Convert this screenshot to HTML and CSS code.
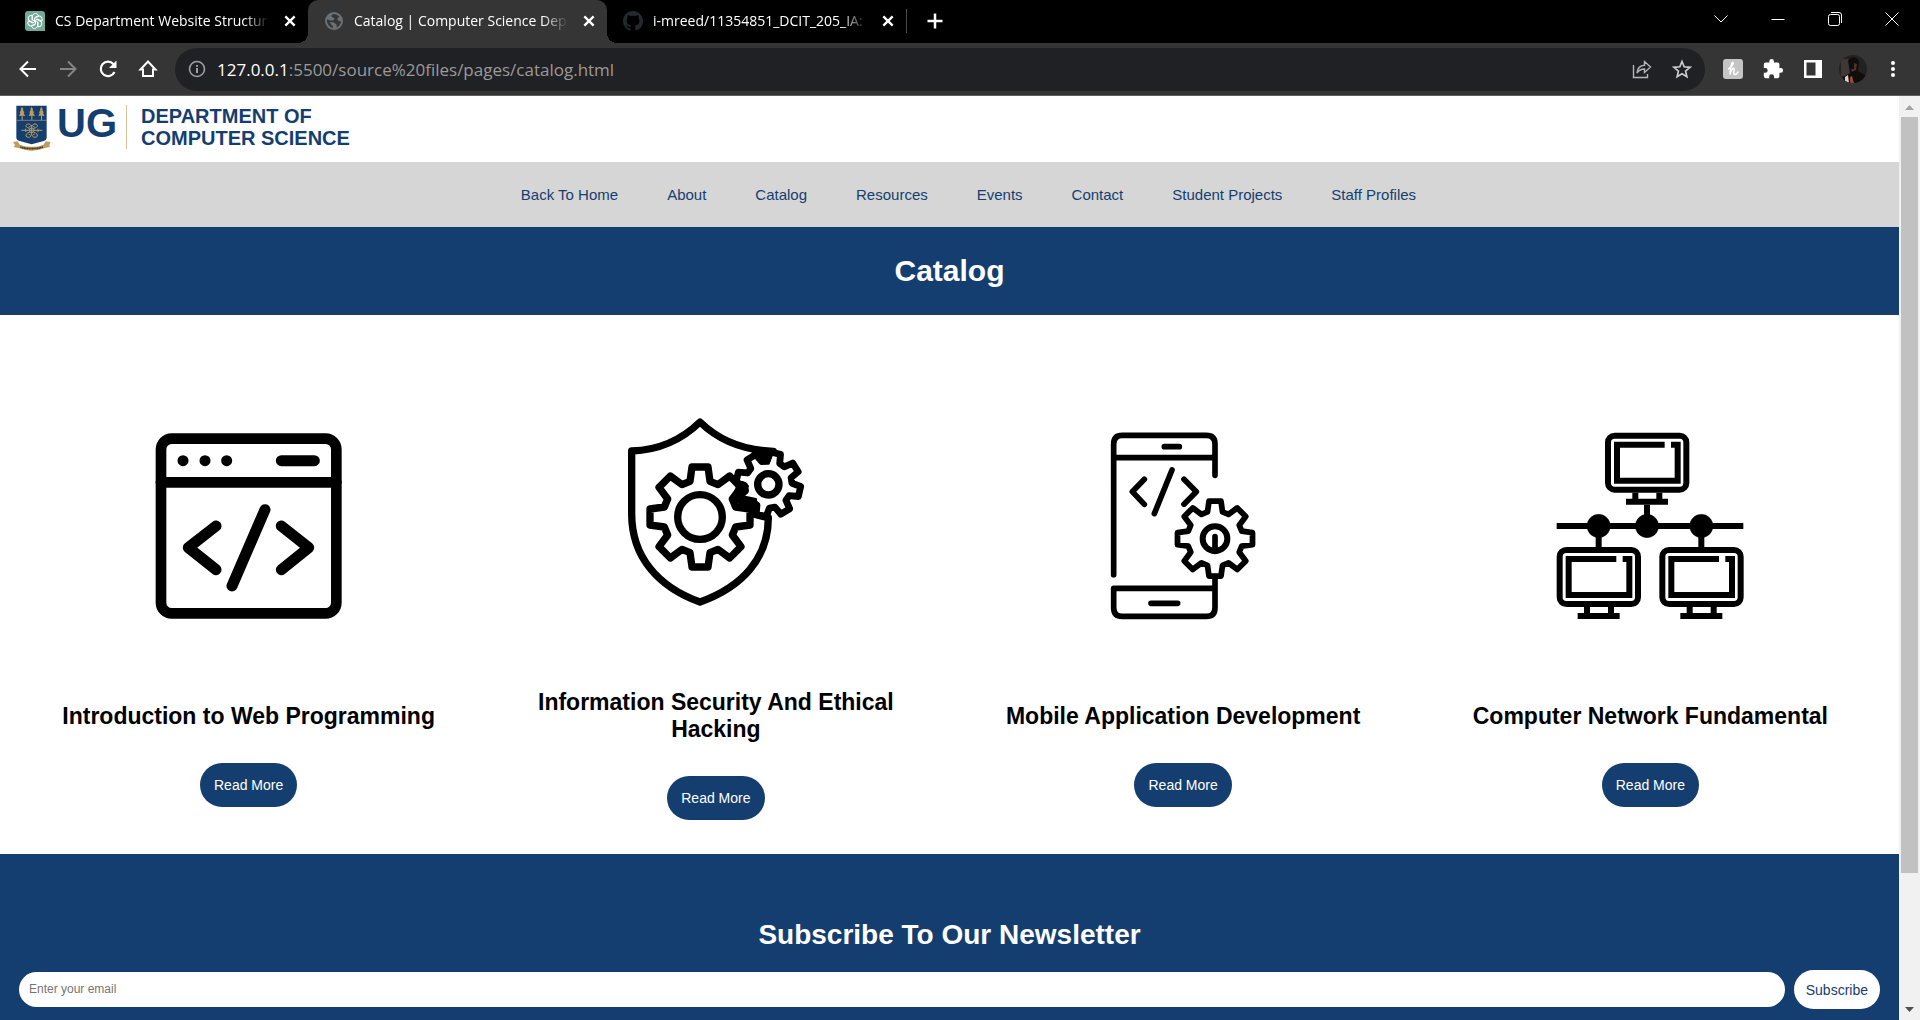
FILE: index.html
```html
<!DOCTYPE html>
<html lang="en">
<head>
<meta charset="utf-8">
<title>Catalog | Computer Science Department</title>
<link rel="stylesheet" href="styles.css">
</head>
<body>
<svg class="defs" aria-hidden="true">
  <defs>
    <path id="gear" d="M-30-107L-24-150L24-150L30-107L54-97L89-123L123-89L97-54L107-30L150-24L150 24L107 30L97 54L123 89L89 123L54 97L30 107L24 150L-24 150L-30 107L-54 97L-89 123L-123 89L-97 54L-107 30L-150 24L-150-24L-107-30L-97-54L-123-89L-89-123L-54-97Z"/>
    <g id="monitor">
      <rect x="9" y="9" width="235" height="162" rx="20" fill="none" stroke-width="18"/>
      <path d="M179 36H36V144H218V36H198" fill="none" stroke-width="18"/>
      <path d="M91 180V198M163 180V198M63 207H189" fill="none" stroke-width="18"/>
    </g>
  </defs>
</svg>

<div class="browser">
  <div class="tabstrip">
    <div class="tab">
      <svg class="favicon" viewBox="0 0 20 20"><path d="M3 0H17a3 3 0 0 1 3 3V20H3a3 3 0 0 1-3-3V3a3 3 0 0 1 3-3z" fill="#74aa9c"/><g fill="none" stroke="#fff" stroke-width="1"><path id="petal" d="M7.500 9V5.500C7.500 3.500 9 2.500 10.500 2.500S13 3.500 13.500 4.500L9.500 6.800V11"/><use href="#petal" transform="rotate(60 10 10)"/><use href="#petal" transform="rotate(120 10 10)"/><use href="#petal" transform="rotate(180 10 10)"/><use href="#petal" transform="rotate(240 10 10)"/><use href="#petal" transform="rotate(300 10 10)"/></g></svg>
      <span class="tab-title">CS Department Website Structur</span>
      <button class="tab-close" aria-label="Close tab"><svg viewBox="0 0 12 12"><path d="M2 2l8 8M10 2l-8 8"/></svg></button>
    </div>
    <div class="tab tab-active">
      <svg class="favicon" viewBox="0 0 20 20"><circle cx="10" cy="10" r="9" fill="#6b7075"/><path d="M9 3C7 4 7 6 9 6.500C11 7 11 8 9.500 9C8 10 7 10 5 9L3 8.500C2.500 12 5 16 9 17V15C7 14 7 12.500 5.500 11.500C8 11 10 11 11 12.500C12.500 13 13 14 12.500 16.500C15 15.500 17 13 17 10C15.500 10.500 14 10 13.500 8.500C13 7 14 6.500 15.500 6C14 4 12 3 9 3z" fill="#353535"/></svg>
      <span class="tab-title">Catalog | Computer Science Dep</span>
      <button class="tab-close" aria-label="Close tab"><svg viewBox="0 0 12 12"><path d="M2 2l8 8M10 2l-8 8"/></svg></button>
    </div>
    <div class="tab">
      <svg class="favicon" viewBox="0 0 16 16"><path fill="#24292e" d="M8 0C3.580 0 0 3.580 0 8c0 3.540 2.290 6.530 5.470 7.590.4.070.55-.17.55-.38 0-.19-.01-.82-.01-1.490-2.010.37-2.530-.49-2.690-.94-.09-.23-.48-.94-.82-1.130-.28-.15-.68-.52-.01-.53.63-.01 1.080.58 1.230.82.72 1.210 1.870.87 2.330.66.070-.52.280-.87.510-1.070-1.780-.2-3.640-.89-3.640-3.950 0-.87.310-1.590.820-2.150-.08-.2-.36-1.020.08-2.120 0 0 .67-.21 2.200.82.64-.18 1.320-.27 2-.27s1.360.09 2 .27c1.530-1.040 2.200-.82 2.200-.82.440 1.100.160 1.920.080 2.120.510.560.820 1.270.820 2.150 0 3.070-1.870 3.750-3.650 3.950.290.250.540.730.540 1.480 0 1.070-.01 1.930-.01 2.200 0 .21.150.46.550.38A8.010 8.010 0 0 0 16 8c0-4.420-3.580-8-8-8z"/></svg>
      <span class="tab-title">i-mreed/11354851_DCIT_205_IA:</span>
      <button class="tab-close" aria-label="Close tab"><svg viewBox="0 0 12 12"><path d="M2 2l8 8M10 2l-8 8"/></svg></button>
    </div>
    <button class="new-tab" aria-label="New tab"><svg width="16" height="16" viewBox="0 0 16 16"><path d="M8 0.500V15.500M.5 8H15.500" stroke="#fff" stroke-width="2.500"/></svg></button>
    <div class="window-controls">
      <button aria-label="Search tabs"><svg width="14" height="14" viewBox="0 0 14 14"><path d="M0.500 3.500L7 10L13.500 3.500"/></svg></button>
      <button aria-label="Minimize"><svg width="14" height="14" viewBox="0 0 14 14"><path d="M0.500 7.500H13.500"/></svg></button>
      <button aria-label="Restore"><svg width="14" height="14" viewBox="0 0 14 14"><rect x="0.500" y="2.500" width="11" height="11" rx="2"/><path d="M3 .5H11a2.500 2.500 0 0 1 2.500 2.500V11"/></svg></button>
      <button aria-label="Close"><svg width="14" height="14" viewBox="0 0 14 14"><path d="M.5 .5L13.500 13.500M13.500 .5L.5 13.500"/></svg></button>
    </div>
  </div>

  <div class="toolbar">
    <button class="tool" aria-label="Back"><svg width="20" height="20" viewBox="0 0 20 20" fill="none" stroke="#fff" stroke-width="2"><path d="M18 10H3M10 2.500L2.500 10L10 17.500"/></svg></button>
    <button class="tool" aria-label="Forward"><svg width="20" height="20" viewBox="0 0 20 20" fill="none" stroke="#858585" stroke-width="2"><path d="M2 10H17M10 2.500L17.500 10L10 17.500"/></svg></button>
    <button class="tool" aria-label="Reload"><svg width="20" height="20" viewBox="0 0 20 20"><path d="M16.500 13A7.200 7.200 0 1 1 15.500 5.200" fill="none" stroke="#fff" stroke-width="2.200"/><path d="M18.500 1.500V9H11z" fill="#fff"/></svg></button>
    <button class="tool" aria-label="Home"><svg width="20" height="20" viewBox="0 0 20 20"><path d="M2.500 10.500L10 2.500L17.500 10.500H15V17H5V10.500z" fill="none" stroke="#fff" stroke-width="2"/></svg></button>
    <div class="omnibox">
      <svg width="18" height="18" viewBox="0 0 18 18"><circle cx="9" cy="9" r="7.500" fill="none" stroke="#9aa0a6" stroke-width="1.600"/><path d="M9 8V13M9 5V6.700" stroke="#9aa0a6" stroke-width="2"/></svg>
      <span class="url"><b>127.0.0.1</b>:5500/source%20files/pages/catalog.html</span>
      <button aria-label="Share"><svg width="20" height="20" viewBox="0 0 20 20" fill="none" stroke="#b4b6b8" stroke-width="1.400"><path d="M1.500 6V18.500H15.500V15"/><path d="M5 14C5.500 8.500 8.500 6.500 12.500 6.300V2.500L18.500 8L12.500 13.500V10C9 10 7 11 5 14z"/></svg></button>
      <button aria-label="Bookmark"><svg width="20" height="20" viewBox="0 0 20 20"><path d="M10 2.500L12.200 7.800L18 8.300L13.600 12.100L14.900 17.700L10 14.700L5.100 17.700L6.400 12.100L2 8.300L7.800 7.800z" fill="none" stroke="#c8cacc" stroke-width="1.700"/></svg></button>
    </div>
    <button class="tool" aria-label="Honey"><svg width="22" height="22" viewBox="0 0 22 22"><rect x="1" y="1" width="20" height="20" rx="3" fill="#c4c4c4"/><path d="M6.500 11C9.500 9 12 5.500 11 4.500S8.500 8 8 16.500C9 12 11 9.500 12 10.300S10.500 16 12.500 16.500S15 15.500 16 14" fill="none" stroke="#fff" stroke-width="1.500" stroke-linecap="round"/></svg></button>
    <button class="tool" aria-label="Extensions"><svg width="22" height="22" viewBox="0 0 24 24" fill="#fff"><path d="M20.500 11H19V7a2 2 0 0 0-2-2h-4V3.500a2.500 2.500 0 0 0-5 0V5H4a2 2 0 0 0-2 2v3.800h1.500a2.700 2.700 0 0 1 0 5.400H2V20a2 2 0 0 0 2 2h3.800v-1.500a2.700 2.700 0 0 1 5.400 0V22H17a2 2 0 0 0 2-2v-4h1.500a2.500 2.500 0 0 0 0-5z"/></svg></button>
    <button class="tool" aria-label="Side panel"><svg width="18" height="18" viewBox="0 0 18 18"><path fill="#fff" fill-rule="evenodd" d="M0 0H18V18H0zM2.500 2.500V15.500H11.500V2.500z"/></svg></button>
    <button class="tool" aria-label="Profile"><svg width="28" height="28" viewBox="0 0 28 28"><defs><clipPath id="face"><circle cx="14" cy="14" r="14"/></clipPath></defs><g clip-path="url(#face)"><path fill="#242122" d="M0 0H28V28H0z"/><path fill="#3d3735" d="M2 4H11V21H2z"/><path fill="#120d0d" d="M9 6C11 1 19 1 20 7L19 16L28 21V28H4V22L11 18z"/><path fill="#4b332d" d="M15 8L18 9L17 15L13 17L12 14L15 14z"/><path fill="#d9d0cd" d="M6 22L9 20L10 28H6z"/><path fill="#994a35" d="M11 22L13 21L15 28H11z"/></g></svg></button>
    <button class="tool" aria-label="Menu"><svg width="6" height="18" viewBox="0 0 6 18" fill="#fff"><circle cx="3" cy="3" r="2"/><circle cx="3" cy="9" r="2"/><circle cx="3" cy="15" r="2"/></svg></button>
  </div>

  <div class="viewport">
    <div class="page">
      <header class="site-header">
        <svg class="crest" width="38" height="46" viewBox="0 0 114 138">
          <path fill="#153e70" d="M10 2H101V98Q101 105 92 108L56 118L20 108Q10 105 10 98z"/>
          <path stroke="#bd9c5d" stroke-width="2" d="M10 46H101"/>
          <g fill="#bd9c5d"><path id="palm" d="M27 5L31 13L30 16L34 22L32 25L37 33L29 32V45H26V32L18 33L22 25L20 22L24 16L23 13z"/><use href="#palm" x="29"/><use href="#palm" x="58"/></g>
          <g fill="none" stroke="#bd9c5d" stroke-width="3"><path d="M25 76H88M56 60V92M38 71V81M75 71V81"/><circle cx="56" cy="76" r="7"/><path d="M50 70C36 68 36 57 46 57S55 66 47 66M62 70C76 68 76 57 66 57S57 66 65 66M50 82C36 84 36 97 46 97S55 88 47 88M62 82C76 84 76 97 66 97S57 88 65 88"/></g>
          <path fill="#bd9c5d" d="M0 111L14 109L20 119Q56 132 92 119L98 109L113 111L109 120L111 126L95 129Q56 145 17 129L2 126L6 120z"/>
          <path fill="none" stroke="#3f3b2c" stroke-width="5" stroke-dasharray="4 1" d="M22 126Q56 136 90 126"/>
        </svg>
        <span class="brand-mark">UG</span>
        <span class="brand-name">DEPARTMENT OF<br>COMPUTER SCIENCE</span>
      </header>

      <nav class="site-nav">
        <a href="#">Back To Home</a>
        <a href="#">About</a>
        <a href="#">Catalog</a>
        <a href="#">Resources</a>
        <a href="#">Events</a>
        <a href="#">Contact</a>
        <a href="#">Student Projects</a>
        <a href="#">Staff Profiles</a>
      </nav>

      <h1 class="page-title">Catalog</h1>

      <main class="courses">
        <article class="course">
          <svg class="course-icon" viewBox="-3 18 660 660">
            <rect x="63" y="86" width="526" height="524" rx="32" stroke-width="32"/>
            <path stroke-width="32" d="M63 217H589"/>
            <path stroke-width="33" d="M129 152h.1M195 152h.1M260 152h.1M424 152H523M228 348L145 413L228 479M424 348L506 413L424 479M375 299L276 528"/>
          </svg>
          <h2>Introduction to Web Programming</h2>
          <button class="read-more">Read More</button>
        </article>
        <article class="course">
          <svg class="course-icon" viewBox="-12 5 660 660">
            <path stroke-width="22" d="M490 153Q355 148 270 65Q185 148 65 152V340C65 470 145 560 270 605C395 560 475 475 475 352L430 341"/>
            <use href="#gear" x="270" y="350" class="gear-large"/>
            <circle cx="270" cy="350" r="67" stroke-width="22"/>
            <use href="#gear" transform="translate(475 252) rotate(13) scale(.64)" class="gear-small"/>
            <circle cx="475" cy="252" r="32" stroke-width="22"/>
            <path fill="#000" stroke-width="6" d="M428 158L488 155L476 190L462 190L450 166zM372 236L398 246L414 258L386 262L398 288L438 296L442 346L420 334L398 318L368 290L380 262z"/>
          </svg>
          <h2>Information Security And Ethical Hacking</h2>
          <button class="read-more">Read More</button>
        </article>
        <article class="course">
          <svg class="course-icon" viewBox="-21 18 660 660">
            <path stroke-width="17" d="M101 494V102Q101 76 127 76H379Q405 76 405 102V196M101 143H405M253 110H298M193 208L157 245L193 283M312 208L349 245L312 283M276 180L223 311M405 500V593Q405 619 379 619H127Q101 619 101 593V535H405M213 580H293M405 380V424"/>
            <use href="#gear" transform="translate(405 386) scale(.75)" class="gear-medium"/>
            <circle cx="405" cy="386" r="37" stroke-width="18"/>
          </svg>
          <h2>Mobile Application Development</h2>
          <button class="read-more">Read More</button>
        </article>
        <article class="course">
          <svg class="course-icon network" viewBox="1 18 660 660">
            <use href="#monitor" x="196" y="68"/>
            <use href="#monitor" x="51" y="411"/>
            <use href="#monitor" x="359" y="411"/>
            <path stroke-width="18" d="M51 348H611M322 284V348M177 348V412M485 348V412"/>
            <g fill="#000"><circle cx="177" cy="348" r="35"/><circle cx="322" cy="348" r="35"/><circle cx="485" cy="348" r="35"/></g>
          </svg>
          <h2>Computer Network Fundamental</h2>
          <button class="read-more">Read More</button>
        </article>
      </main>

      <section class="newsletter">
        <h2>Subscribe To Our Newsletter</h2>
        <form class="subscribe-form">
          <input type="email" placeholder="Enter your email" aria-label="Email address">
          <button type="button">Subscribe</button>
        </form>
      </section>
    </div>
    <div class="scrollbar" aria-hidden="true">
      <svg width="21" height="21" viewBox="0 0 21 21"><path d="M6 14L10.500 9L15 14z" fill="#a3a3a3"/></svg>
      <div class="scroll-track"><div class="scroll-thumb"></div></div>
      <svg width="21" height="21" viewBox="0 0 21 21"><path d="M6 8L10.500 13L15 8z" fill="#505050"/></svg>
    </div>
  </div>
</div>
</body>
</html>
```
FILE: styles.css
```css
* { box-sizing: border-box; }

body {
  margin: 0;
  background: #fff;
  font-family: "Liberation Sans", Arial, sans-serif;
}

h1, h2 { margin: 0; font-weight: bold; }

button {
  border: 0;
  padding: 0;
  background: none;
  font-family: inherit;
}

.defs { display: none; }

.browser {
  display: flex;
  flex-direction: column;
  height: 100vh;
  overflow: hidden;
}

/* Tab strip */
.tabstrip {
  display: flex;
  flex: none;
  height: 43px;
  padding-left: 9px;
  background: #000;
  color: #fff;
  font-family: "Open Sans", "Noto Sans", sans-serif;
  font-size: 14px;
}

.tab {
  position: relative;
  display: flex;
  align-items: center;
  gap: 10px;
  width: 299px;
  padding: 0 11px 2px 16px;
}

.tab-active {
  background: #353535;
  border-radius: 10px 10px 0 0;
}

.tab-active::before,
.tab-active::after {
  content: "";
  position: absolute;
  bottom: 0;
  width: 10px;
  height: 10px;
}

.tab-active::before {
  right: 100%;
  background: radial-gradient(circle at 0 0, transparent 10px, #353535 10px);
}

.tab-active::after {
  left: 100%;
  background: radial-gradient(circle at 100% 0, transparent 10px, #353535 10px);
}

.favicon { flex: none; width: 20px; height: 20px; }

.tab-title {
  flex: 1;
  min-width: 0;
  overflow: hidden;
  white-space: nowrap;
  mask-image: linear-gradient(to right, #000 88%, transparent);
}

.tab-close { display: flex; margin-left: 4px; }

.tab-close svg {
  width: 14px;
  height: 14px;
  stroke: #fff;
  stroke-width: 2;
}

.new-tab {
  display: flex;
  align-items: center;
  height: 24px;
  margin-top: 9px;
  padding-left: 20px;
  border-left: 1px solid #4a4a4a;
}

.window-controls { display: flex; margin-left: auto; }

.window-controls button {
  display: flex;
  align-items: center;
  justify-content: center;
  width: 57px;
  height: 37px;
}

.window-controls svg { fill: none; stroke: #fff; }

/* Toolbar */
.toolbar {
  display: flex;
  flex: none;
  align-items: center;
  height: 53px;
  padding: 0 7px 0 8px;
  background: #353535;
  border-bottom: 1px solid #5f5f5f;
}

.tool {
  display: flex;
  align-items: center;
  justify-content: center;
  width: 40px;
  height: 40px;
}

.omnibox {
  display: flex;
  flex: 1;
  align-items: center;
  height: 43px;
  margin: 0 8px 0 7px;
  padding: 0 13px;
  border-radius: 22px;
  background: #202124;
}

.omnibox button {
  display: flex;
  justify-content: center;
  width: 40px;
}

.omnibox button:last-child { width: 20px; margin-left: 10px; }

.url {
  flex: 1;
  margin-left: 11px;
  color: #9a9a9a;
  font-family: "Open Sans", "Noto Sans", sans-serif;
  font-size: 17px;
}

.url b { color: #fff; font-weight: normal; }

/* Page viewport */
.viewport {
  display: flex;
  flex: 1;
  min-height: 0;
}

.page {
  display: flex;
  flex: 1;
  flex-direction: column;
  min-width: 0;
  overflow: hidden;
}

.scrollbar {
  display: flex;
  flex-direction: column;
  width: 21px;
  background: #f1f1f1;
}

.scroll-track {
  display: grid;
  flex: 1;
  grid-template-rows: 6fr 1fr;
  padding: 0 2px;
}

.scroll-thumb { background: #c1c1c1; }

.site-header {
  display: flex;
  flex: none;
  align-items: flex-start;
  height: 66px;
  padding: 9px 13px;
  color: #153e70;
  font-weight: bold;
}

.brand-mark {
  margin: 0 9px 0 6px;
  font-size: 40px;
  line-height: 36px;
}

.brand-name {
  padding-left: 14px;
  border-left: 1px solid #d6c39c;
  font-size: 20px;
  line-height: 22px;
}

.site-nav {
  display: flex;
  flex: none;
  align-items: center;
  justify-content: center;
  gap: 49px;
  height: 65px;
  padding-left: 38px;
  background: #d6d6d6;
  font-size: 15px;
}

.site-nav a { color: #153e70; text-decoration: none; }

.page-title {
  flex: none;
  padding: 27px 0;
  background: #153e70;
  color: #fff;
  font-size: 30px;
  line-height: 34px;
  text-align: center;
}

.courses {
  display: grid;
  flex: none;
  grid-template-columns: repeat(4, 1fr);
  align-items: center;
  padding: 87px 15px 34px;
}

.course {
  display: flex;
  flex-direction: column;
  align-items: center;
  padding: 0 20px;
  text-align: center;
}

.course-icon {
  width: 220px;
  height: 220px;
  fill: none;
  stroke: #000;
  stroke-linecap: round;
  stroke-linejoin: round;
}

.network { stroke-linecap: butt; stroke-linejoin: miter; }

.gear-large { stroke-width: 22px; }
.gear-small { stroke-width: 32px; }
.gear-medium { stroke-width: 23px; }

.course h2 {
  margin: 67px 0 33px;
  font-size: 23px;
  line-height: 27px;
}

.read-more {
  height: 44px;
  padding: 0 14px;
  border-radius: 22px;
  background: #153e70;
  color: #fff;
  font-size: 14px;
}

.newsletter {
  flex: 1 0 auto;
  padding: 65px 19px 11px;
  background: #153e70;
  color: #fff;
}

.newsletter h2 {
  font-size: 28px;
  line-height: 32px;
  text-align: center;
}

.subscribe-form {
  display: flex;
  align-items: center;
  gap: 9px;
  margin-top: 19px;
}

.subscribe-form input {
  flex: 1;
  height: 35px;
  padding: 0 10px 2px;
  border: 0;
  border-radius: 18px;
  font-family: inherit;
  font-size: 12px;
}

.subscribe-form input::placeholder { color: #757575; }

.subscribe-form button {
  height: 39px;
  padding: 0 12px;
  border-radius: 20px;
  background: #fff;
  color: #153e70;
  font-size: 14px;
}
```
